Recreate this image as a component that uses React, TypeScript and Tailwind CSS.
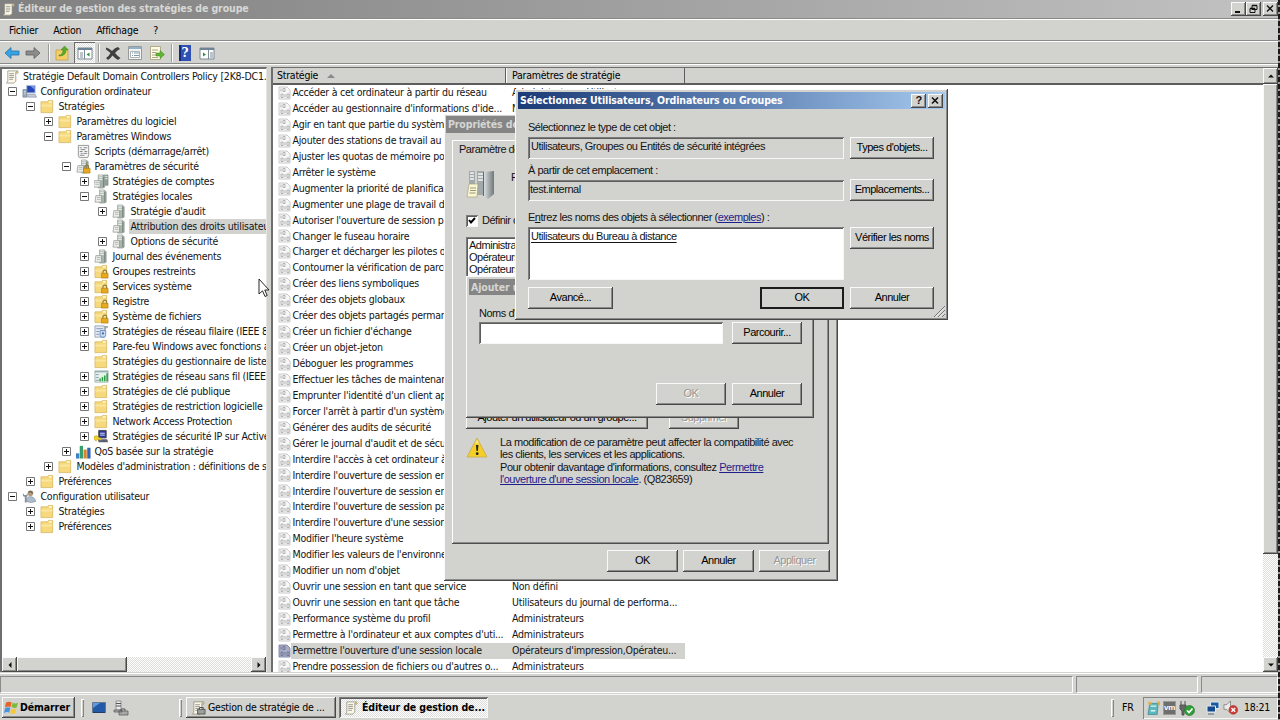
import type { ReactNode } from 'react';
import clsx from 'clsx';

type IconName =
    | 'scroll' | 'pc' | 'user' | 'folder' | 'lockFolder' | 'script' | 'serverLock'
    | 'servers' | 'server' | 'wired' | 'wireless' | 'ipsec' | 'qos';

interface TreeItem {
    depth: number;
    label: string;
    icon: IconName;
    state?: '+' | '-';
    selected?: boolean;
}

const RAISED = 'bg-[#d2d2cf] shadow-[inset_-1px_-1px_0_#484848,inset_1px_1px_0_#fafafa,inset_-2px_-2px_0_#8b8b89]';
const SUNKEN = 'shadow-[inset_1px_1px_0_#7c7c7c,inset_-1px_-1px_0_#f7f7f7,inset_2px_2px_0_#5c5c5c]';
const SUNKEN_THIN = 'shadow-[inset_1px_1px_0_#6c6c6c,inset_-1px_-1px_0_#f7f7f7]';
const TRACK = 'bg-[repeating-conic-gradient(#ffffff_0_25%,#dcdcda_0_50%)] bg-[length:2px_2px]';
const UI = "font-['DejaVu_Sans_Condensed','DejaVu_Sans',sans-serif] text-[10.5px] tracking-[-0.24px]";
const UI_BOLD = "font-['DejaVu_Sans_Condensed','DejaVu_Sans',sans-serif] font-bold text-[10.5px] tracking-[-0.11px]";
const DLG = "font-['Liberation_Sans',sans-serif] text-[11px] tracking-[-0.48px]";

const TREE: TreeItem[] = [
    { depth: 0, label: 'Configuration ordinateur', icon: 'pc', state: '-' },
    { depth: 1, label: 'Stratégies', icon: 'folder', state: '-' },
    { depth: 2, label: 'Paramètres du logiciel', icon: 'folder', state: '+' },
    { depth: 2, label: 'Paramètres Windows', icon: 'folder', state: '-' },
    { depth: 3, label: 'Scripts (démarrage/arrêt)', icon: 'script' },
    { depth: 3, label: 'Paramètres de sécurité', icon: 'serverLock', state: '-' },
    { depth: 4, label: 'Stratégies de comptes', icon: 'servers', state: '+' },
    { depth: 4, label: 'Stratégies locales', icon: 'server', state: '-' },
    { depth: 5, label: "Stratégie d'audit", icon: 'server', state: '+' },
    { depth: 5, label: 'Attribution des droits utilisateur', icon: 'server', selected: true },
    { depth: 5, label: 'Options de sécurité', icon: 'server', state: '+' },
    { depth: 4, label: 'Journal des événements', icon: 'server', state: '+' },
    { depth: 4, label: 'Groupes restreints', icon: 'lockFolder', state: '+' },
    { depth: 4, label: 'Services système', icon: 'lockFolder', state: '+' },
    { depth: 4, label: 'Registre', icon: 'lockFolder', state: '+' },
    { depth: 4, label: 'Système de fichiers', icon: 'lockFolder', state: '+' },
    { depth: 4, label: 'Stratégies de réseau filaire (IEEE 802.3)', icon: 'wired', state: '+' },
    { depth: 4, label: 'Pare-feu Windows avec fonctions avancées', icon: 'folder', state: '+' },
    { depth: 4, label: 'Stratégies du gestionnaire de listes', icon: 'folder' },
    { depth: 4, label: 'Stratégies de réseau sans fil (IEEE 802.11)', icon: 'wireless', state: '+' },
    { depth: 4, label: 'Stratégies de clé publique', icon: 'folder', state: '+' },
    { depth: 4, label: 'Stratégies de restriction logicielle', icon: 'folder', state: '+' },
    { depth: 4, label: 'Network Access Protection', icon: 'folder', state: '+' },
    { depth: 4, label: 'Stratégies de sécurité IP sur Active Directory', icon: 'ipsec', state: '+' },
    { depth: 3, label: 'QoS basée sur la stratégie', icon: 'qos', state: '+' },
    { depth: 2, label: "Modèles d'administration : définitions de stratégies", icon: 'folder', state: '+' },
    { depth: 1, label: 'Préférences', icon: 'folder', state: '+' },
    { depth: 0, label: 'Configuration utilisateur', icon: 'user', state: '-' },
    { depth: 1, label: 'Stratégies', icon: 'folder', state: '+' },
    { depth: 1, label: 'Préférences', icon: 'folder', state: '+' },
];

const POLICIES: [string, string][] = [
    ['Accéder à cet ordinateur à partir du réseau', 'Administrateurs,Utilisateurs...'],
    ["Accéder au gestionnaire d'informations d'ide...", 'Non défini'],
    ['Agir en tant que partie du système', ''],
    ['Ajouter des stations de travail au domaine', ''],
    ['Ajuster les quotas de mémoire pour', ''],
    ['Arrêter le système', ''],
    ['Augmenter la priorité de planification', ''],
    ['Augmenter une plage de travail de', ''],
    ["Autoriser l'ouverture de session par", ''],
    ['Changer le fuseau horaire', ''],
    ['Charger et décharger les pilotes de', ''],
    ['Contourner la vérification de parcours', ''],
    ['Créer des liens symboliques', ''],
    ['Créer des objets globaux', ''],
    ['Créer des objets partagés permanents', ''],
    ["Créer un fichier d'échange", ''],
    ['Créer un objet-jeton', ''],
    ['Déboguer les programmes', ''],
    ['Effectuer les tâches de maintenance', ''],
    ["Emprunter l'identité d'un client après", ''],
    ["Forcer l'arrêt à partir d'un système", ''],
    ['Générer des audits de sécurité', ''],
    ["Gérer le journal d'audit et de sécurité", ''],
    ["Interdire l'accès à cet ordinateur à", ''],
    ["Interdire l'ouverture de session en", ''],
    ["Interdire l'ouverture de session en", ''],
    ["Interdire l'ouverture de session par", ''],
    ["Interdire l'ouverture d'une session", ''],
    ["Modifier l'heure système", ''],
    ["Modifier les valeurs de l'environnement", ''],
    ["Modifier un nom d'objet", ''],
    ['Ouvrir une session en tant que service', 'Non défini'],
    ['Ouvrir une session en tant que tâche', 'Utilisateurs du journal de performa...'],
    ['Performance système du profil', 'Administrateurs'],
    ["Permettre à l'ordinateur et aux comptes d'uti...", 'Administrateurs'],
    ["Permettre l'ouverture d'une session locale", "Opérateurs d'impression,Opérateu..."],
    ["Prendre possession de fichiers ou d'autres o...", 'Administrateurs'],
];

/* ---------- icons ---------- */

function Folder() {
    return (
        <>
            <path d="M1 3h7l1-1.500h4.500V14.500H1z" fill="#f5d97c" stroke="#d0ab50" strokeWidth=".7" />
            <path d="M9.500 2h3v2h-3z" fill="#fff6d0" />
            <path d="M1.500 6h11.500v2H1.500z" fill="#fae6a0" />
        </>
    );
}

function Lock() {
    return (
        <>
            <path d="M9.500 10V8.500a2 2 0 0 1 4 0V10" fill="none" stroke="#8f7a38" strokeWidth="1.200" />
            <path d="M8 10h7v5H8z" fill="#e9a91c" stroke="#a97409" strokeWidth=".6" />
        </>
    );
}

function ServerShape() {
    return (
        <>
            <path d="M6 1h5l2 2v11l-2 1H6z" fill="#a9b4ad" stroke="#7e8a83" strokeWidth=".6" />
            <path d="M6.500 2h4M6.500 4h4M6.500 6h4" stroke="#f3f6f4" />
            <path d="M11.500 3v11" stroke="#6d7f74" />
            <path d="M2 7h6v7H1z" fill="#eceee9" stroke="#8b928c" strokeWidth=".7" />
            <path d="M3 9h4M3 11h4" stroke="#98a29b" strokeWidth=".7" />
        </>
    );
}

function ScrollShape() {
    return (
        <>
            <path d="M3 2h10.500l-2 2v9l-2 2H1.500l1.500-2z" fill="#fbf8ea" stroke="#8f8c7c" strokeWidth=".8" />
            <path d="M11.500 4l1.800-2 1 1.500-1 1.500z" fill="#d8c694" stroke="#98895e" strokeWidth=".5" />
            <path d="M4.500 5h5M4.500 7h5M4.500 9h5M4.500 11h4" stroke="#7e7e78" strokeWidth=".8" />
        </>
    );
}

function TreeIcon({ name, className = 'size-[15px]' }: { name: IconName; className?: string }) {
    return (
        <svg viewBox="0 0 16 16" className={clsx('shrink-0', className)}>
            {name === 'scroll' && <ScrollShape />}
            {name === 'folder' && <Folder />}
            {name === 'lockFolder' && <><Folder /><Lock /></>}
            {name === 'server' && <ServerShape />}
            {name === 'serverLock' && <><ServerShape /><Lock /></>}
            {name === 'servers' && (
                <>
                    <path d="M10 1h5v11h-5z" fill="#8fa39a" stroke="#72847b" strokeWidth=".6" />
                    <path d="M10.500 2.500h4M10.500 5h4" stroke="#e8efeb" />
                    <g transform="translate(-1.500 0)"><ServerShape /></g>
                </>
            )}
            {name === 'script' && (
                <>
                    <path d="M2.500 1.500h11v10l-1 3h-9l-1-2z" fill="#f5f5f5" stroke="#888" strokeWidth=".9" />
                    <path d="M4 4h2M8 4h4M5 6h5M4 8h3M9 8h3M5 10h2M8 10h4M4 12h5" stroke="#777" strokeWidth=".9" />
                </>
            )}
            {name === 'pc' && (
                <>
                    <path d="M5 1.500h9v8H5z" fill="#2547b8" stroke="#b9c2d6" />
                    <path d="M9 2h4.500v4z" fill="#7896ea" />
                    <path d="M1 6h4v8H1z" fill="#9badbd" stroke="#66788c" strokeWidth=".7" />
                    <path d="M6 11h8l1.500 3H6z" fill="#c5ccda" stroke="#76809a" strokeWidth=".6" />
                    <path d="M2 8h2M2 10h2" stroke="#e8eef4" strokeWidth=".7" />
                </>
            )}
            {name === 'user' && (
                <>
                    <circle cx="9" cy="4.500" r="3" fill="#b59a7c" />
                    <path d="M6.200 4q2-4 5.600-.5L11 5 9 3.500z" fill="#66635b" />
                    <path d="M4 13q1-5 5-5t6 5q-5 3-11 0z" fill="#aebccb" stroke="#7b8b9e" strokeWidth=".6" />
                    <path d="M1 4.500v3l2 1v6h2v-6l1-1v-3l-1.500 2h-2z" fill="#86929c" />
                </>
            )}
            {name === 'wired' && (
                <>
                    <path d="M1 2h10v12H1z" fill="#e4ebf3" stroke="#8296ae" strokeWidth=".8" />
                    <path d="M2.500 5h7M2.500 8h3M2.500 11h3" stroke="#7d94b5" />
                    <path d="M11 2h4v2h-2v2h-2z" fill="#9aa" />
                    <path d="M6.500 7h6v5l-1 2h-4l-1-2z" fill="#c9daf2" stroke="#5578ae" strokeWidth=".8" />
                    <path d="M8.500 9h2v2h-2z" fill="#3d64a3" />
                </>
            )}
            {name === 'wireless' && (
                <>
                    <path d="M1 2h14v12H1z" fill="#e9f2ea" stroke="#8ba696" strokeWidth=".8" />
                    <path d="M1 3h14M2 6h3M2 9h3M2 12h3" stroke="#7a9cad" />
                    <path d="M6.500 13v-3M9 13V8.500M11.500 13V7M14 13V4.500" stroke="#2a9d45" strokeWidth="1.600" />
                </>
            )}
            {name === 'ipsec' && (
                <>
                    <path d="M5 1.500h8v8H5z" fill="#26399b" stroke="#4d4d4d" />
                    <path d="M6.500 4.500h5M6.500 6.500h5" stroke="#e6e9ff" />
                    <path d="M4 11h10l1 3H5z" fill="#5a5f70" />
                    <path d="M0 8l3-1 2 2 3 1v2l-4-1-2 2-2-2z" fill="#f0d02c" stroke="#a58d17" strokeWidth=".5" />
                </>
            )}
            {name === 'qos' && (
                <>
                    <path d="M0 10h3.500v5.500H0z" fill="#3b82c4" />
                    <path d="M4 2h3.500v13.500H4z" fill="#35a06b" />
                    <path d="M8 6h3.500v9.500H8z" fill="#d98435" />
                    <path d="M12 4h3.500v11.500H12z" fill="#2f66b5" />
                </>
            )}
        </svg>
    );
}

function PolicyIcon({ active }: { active?: boolean }) {
    return (
        <svg viewBox="0 0 13 14" className="h-[14px] w-[13px] shrink-0">
            <path
                d="M1 1h8l3 3v9H1z"
                fill={active ? '#a9aec6' : '#f7f7f7'}
                stroke={active ? '#7f85a6' : '#c4c4c4'}
                strokeWidth=".9"
            />
            <path
                d="M3 2.500v3M5 2.500h2v3H5zM3 8h2v3.500H3zM7 8v3.500M9 8h2v3.500H9z"
                fill="none"
                stroke={active ? '#6c7299' : '#ababab'}
                strokeWidth=".9"
            />
        </svg>
    );
}

function DialogServers() {
    return (
        <svg viewBox="0 0 30 31" className="h-[31px] w-[30px]">
            <defs>
                <linearGradient id="rack" x1="0" x2="1">
                    <stop offset="0" stopColor="#d9dddd" />
                    <stop offset="1" stopColor="#70787a" />
                </linearGradient>
            </defs>
            <path d="M18 3l10-1v23l-6 5-4-2z" fill="url(#rack)" />
            <path d="M11 2h7v24h-7zM3 2h6v13H3z" fill="#a1a9aa" />
            <path d="M4 4h4M4 7h4M4 10h4M12 5h5M12 8h5M12 11h5" stroke="#f3f5f5" strokeWidth="1.500" />
            <path d="M17.500 3v24" stroke="#61696b" />
            <path d="M3 15h9l-1 13H1z" fill="#faf6d2" stroke="#a8a37e" strokeWidth=".7" />
            <path d="M4 19h6M4 21.500h6M3.500 24h6" stroke="#99957c" />
        </svg>
    );
}

/* ---------- classic widgets ---------- */

function Btn({ children, className, disabled }: { children: ReactNode; className?: string; disabled?: boolean }) {
    return (
        <button
            className={clsx(
                'flex shrink-0 items-center justify-center whitespace-nowrap pb-px',
                RAISED,
                disabled ? 'text-[#979795] [text-shadow:1px_1px_0_#fff]' : 'text-black',
                className,
            )}
        >
            {children}
        </button>
    );
}

function CaptionBtn({ children }: { children: ReactNode }) {
    return (
        <button className={clsx('flex h-[14px] w-[15px] items-center justify-center', RAISED)}>
            <svg viewBox="0 0 11 10" className="h-[10px] w-[11px]" fill="none" stroke="#111">{children}</svg>
        </button>
    );
}

function ArrowBtn({ d, className }: { d: string; className: string }) {
    return (
        <div className={clsx('flex shrink-0 items-center justify-center', RAISED, className)}>
            <svg viewBox="0 0 8 8" className="size-2"><path d={d} fill="#111" /></svg>
        </div>
    );
}

function Expander({ state }: { state?: '+' | '-' }) {
    if (!state) return <span className="w-[9px] shrink-0" />;
    return (
        <svg viewBox="0 0 9 9" className="size-[9px] shrink-0">
            <path d="M.5 .5h8v8h-8z" fill="#fff" stroke="#777" />
            <path d={state === '+' ? 'M2 4.500h5M4.500 2v5' : 'M2 4.500h5'} stroke="#111" />
        </svg>
    );
}

const INDENT = ['pl-[6px]', 'pl-[24px]', 'pl-[42px]', 'pl-[60px]', 'pl-[78px]', 'pl-[96px]'];

function ToolSep({ className }: { className: string }) {
    return <div className={clsx('h-[18px] w-[2px] border-l border-r border-l-[#9a9a98] border-r-white', className)} />;
}

function Toolbar() {
    return (
        <div className="flex h-[21px] items-center pl-[4px]">
            <svg viewBox="0 0 16 16" className="size-4"><path d="M1 8l6-5.500v3.500h8v4H7v3.500z" fill="#37a3e2" stroke="#2173a9" strokeWidth=".8" /></svg>
            <svg viewBox="0 0 16 16" className="ml-[5px] size-4"><path d="M15 8L9 2.500v3.500H1v4h8v3.500z" fill="#8c8c8c" stroke="#5f5f5f" strokeWidth=".8" /></svg>
            <ToolSep className="ml-[7px] mr-[4px]" />
            <svg viewBox="0 0 16 16" className="size-4">
                <path d="M2 5h5l1-1h6v11H2z" fill="#f2cf68" stroke="#c69c37" strokeWidth=".7" />
                <path d="M5 10q4 0 4-5H7l3.500-4L14 5h-2q0 6-7 6z" fill="#56ad2b" stroke="#3c7f1c" strokeWidth=".5" />
            </svg>
            <div className={clsx('ml-[4px] flex h-[21px] w-[21px] items-center justify-center', SUNKEN_THIN, TRACK)}>
                <svg viewBox="0 0 16 16" className="size-4">
                    <path d="M1 3h14v11H1z" fill="#fff" stroke="#7b8a96" />
                    <path d="M1 4h14" stroke="#6e8496" strokeWidth="2" />
                    <path d="M7.500 5v9M3 8h3M3 10h3M3 12h3" stroke="#7b8a96" />
                    <path d="M12.500 7.500v4l-3-2z" fill="#2f9141" />
                </svg>
            </div>
            <ToolSep className="ml-[3px] mr-[5px]" />
            <svg viewBox="0 0 16 16" className="size-4"><path d="M1 2.500q3 .5 6 3.500 3-3.500 6-4l2 2q-2.500 1-5 4 2.500 3 5.500 5l-2.500 2q-2.500-1-5.500-4.500-2 3-4.500 4.500L1 13q2.500-1 4.500-5Q3.500 6 1 4.500z" fill="#3f3f3f" /></svg>
            <svg viewBox="0 0 16 16" className="ml-[6px] size-4">
                <path d="M1.500 1.500h13v13h-13z" fill="#f3f3f3" stroke="#999" />
                <path d="M2 3h12" stroke="#8eb4c5" strokeWidth="2" />
                <path d="M3.500 6.500h9v6h-9z" fill="#fff" stroke="#a9b4b9" />
                <path d="M5 8h1M7 8h5M5 10.500h1M7 10.500h5" stroke="#7e9aa8" />
            </svg>
            <svg viewBox="0 0 16 16" className="ml-[6px] size-4">
                <path d="M1.500 1.500h10v13h-10z" fill="#fffbe2" stroke="#b1ac8b" />
                <path d="M3 5h6M3 7.500h4M3 10h4M3 12.500h6" stroke="#aaa68a" />
                <path d="M7 8h4V5.500L15.500 9.500 11 13.500V11H7z" fill="#60b632" stroke="#3f8420" strokeWidth=".5" />
            </svg>
            <ToolSep className="ml-[6px] mr-[6px]" />
            <div className="flex h-[16px] w-[12px] items-center justify-center bg-[#2f50b4] font-['DejaVu_Serif',serif] text-[12px] font-bold text-white shadow-[inset_2px_0_0_#16297a]">?</div>
            <svg viewBox="0 0 16 16" className="ml-[8px] size-4">
                <path d="M1 3h14v11H1z" fill="#fff" stroke="#7b8a96" />
                <path d="M1 4h14" stroke="#6e8496" strokeWidth="2" />
                <path d="M9.500 5v9M11 8h3M11 10h3M11 12h3" stroke="#7b8a96" />
                <path d="M4 7.500v4l3-2z" fill="#2f9141" />
            </svg>
        </div>
    );
}

function TreePane() {
    return (
        <div className="flex w-[267px] shrink-0 flex-col border-l-2 border-r border-t-2 border-[#6e6e6e] border-r-[#e6e6e4] bg-white">
            <div className="min-h-0 flex-1 overflow-hidden">
                <div className="flex h-[15px] items-center gap-[3px] pl-[3px]">
                    <TreeIcon name="scroll" />
                    <span className="whitespace-nowrap">Stratégie Default Domain Controllers Policy [2K8-DC1.</span>
                </div>
                {TREE.map((item, i) => (
                    <div key={i} className={clsx('flex h-[15px] items-center', INDENT[item.depth])}>
                        <Expander state={item.state} />
                        <TreeIcon name={item.icon} className="ml-[5px] size-[15px]" />
                        <span
                            className={clsx(
                                'ml-[2px] h-[15px] whitespace-nowrap pl-[1.5px] leading-[14px]',
                                item.selected && 'bg-[#d2d2cf]',
                            )}
                        >
                            {item.label}
                        </span>
                    </div>
                ))}
            </div>
            <div className={clsx('flex h-[15px]', TRACK)}>
                <ArrowBtn d="M5.500 1v6L2.500 4z" className="w-[15px]" />
                <div className={clsx('w-[110px]', RAISED)} />
                <div className="flex-1" />
                <ArrowBtn d="M2.500 1v6l3-3z" className="w-[15px]" />
            </div>
        </div>
    );
}

function PolicyList() {
    return (
        <div className="flex min-w-0 flex-1 border-l-2 border-t border-[#6e6e6e] bg-white">
            <div className="min-w-0 flex-1 overflow-hidden">
                <div className="flex h-[17px] items-center border-b-2 border-[#5d5d5d] bg-[#d2d2cf] text-black">
                    <div className="flex h-full w-[233px] items-center gap-[9px] border-r border-[#5d5d5d] pl-[4px] pt-px">
                        Stratégie
                        <svg viewBox="0 0 8 4" className="h-1 w-2"><path d="M4 0l4 4H0z" fill="#8a8a8a" /></svg>
                    </div>
                    <div className="flex h-full w-[179px] items-center border-l border-r border-l-white border-r-[#5d5d5d] pl-[5px] pt-px">
                        Paramètres de stratégie
                    </div>
                </div>
                {POLICIES.map(([name, value], i) => {
                    const active = i === 35;
                    return (
                        <div key={i} className="flex h-[15.95px] items-center pl-[5px]">
                            <PolicyIcon active={active} />
                            <div className={clsx('flex h-full w-[394px] items-center whitespace-nowrap', active && 'bg-[#d2d2cf]')}>
                                <span className="w-[221px] shrink-0 pl-[1.5px]">{name}</span>
                                <span>{value}</span>
                            </div>
                        </div>
                    );
                })}
            </div>
            <div className={clsx('flex w-[15px] flex-col', TRACK)}>
                <ArrowBtn d="M1 5.500h6L4 2.500z" className="h-[16px]" />
                <div className={clsx('h-[470px]', RAISED)} />
                <div className="flex-1" />
                <ArrowBtn d="M1 2.500h6L4 5.500z" className="h-[15px]" />
            </div>
        </div>
    );
}

function PropertiesDialog() {
    return (
        <div className={clsx('absolute left-[444px] top-[114px] h-[467px] w-[394px] p-[2px]', RAISED, DLG)}>
            <div className={clsx('h-[17px] bg-[#858585] pl-[2px] leading-[17px] text-[#d6d6d3]', UI_BOLD)}>Propriétés de</div>
            <div className="ml-[6px] mt-[7px] flex h-[17px] w-[84px] items-center whitespace-nowrap border-l border-t border-white pl-[6px]">
                Paramètre de stratégie
            </div>
            <div className="ml-[6px] h-[387px] w-[377px] pl-[14px] pt-[12px] shadow-[inset_-1px_-1px_0_#4e4e4e,inset_1px_0_0_#fff,inset_-2px_-2px_0_#8b8b89]">
                <div className="flex h-[31px] gap-[15px]">
                    <DialogServers />
                    <span>Permettre</span>
                </div>
                <div className="mt-[14px] flex h-[13px] items-center gap-[4px]">
                    <div className={clsx('flex size-[12px] items-center justify-center bg-white', SUNKEN)}>
                        <svg viewBox="0 0 8 8" className="size-2"><path d="M1 3l2 2.500L7 1" fill="none" stroke="#000" strokeWidth="2" /></svg>
                    </div>
                    <span>Définir ces</span>
                </div>
                <div className={clsx('mt-[10px] h-[160px] w-[270px] bg-white py-[2px] pl-[3px] leading-[12px]', SUNKEN)}>
                    <div>Administrateurs</div>
                    <div>Opérateurs de</div>
                    <div>Opérateurs de</div>
                </div>
                <div className="mt-[10px] flex gap-[21px]">
                    <Btn className="h-[22px] w-[182px]">Ajouter un utilisateur ou un groupe...</Btn>
                    <Btn className="h-[22px] w-[70px]" disabled>Supprimer</Btn>
                </div>
                <div className="mt-[7px] flex">
                    <svg viewBox="0 0 22 21" className="mt-px h-[21px] w-[22px]">
                        <path d="M11 1L21 20H1z" fill="#f6cf26" stroke="#cdb156" strokeLinejoin="round" />
                        <path d="M11 2.500l2 4h-4z" fill="#fae88c" />
                        <path d="M10 8h2.400l-.5 6h-1.400z" fill="#222" />
                        <circle cx="11.200" cy="16.700" r="1.400" fill="#222" />
                    </svg>
                    <p className="ml-[12px] whitespace-nowrap leading-[12.3px] tracking-[-0.45px]">
                        La modification de ce paramètre peut affecter la compatibilité avec<br />
                        les clients, les services et les applications.<br />
                        Pour obtenir davantage d'informations, consultez <u className="text-[#1f1f8c]">Permettre</u><br />
                        <u className="text-[#1f1f8c]">l'ouverture d'une session locale</u>. (Q823659)
                    </p>
                </div>
            </div>
            <div className="mr-[6px] mt-[6px] flex justify-end gap-[5px]">
                <Btn className="h-[22px] w-[71px]">OK</Btn>
                <Btn className="h-[22px] w-[71px]">Annuler</Btn>
                <Btn className="h-[22px] w-[71px]" disabled>Appliquer</Btn>
            </div>
        </div>
    );
}

function AddDialog() {
    return (
        <div className={clsx('absolute left-[466px] top-[276px] h-[142px] w-[348px] p-[3px]', RAISED, DLG)}>
            <div className={clsx('h-[16px] bg-[#858585] pl-[2px] leading-[16px] text-[#d6d6d3]', UI_BOLD)}>Ajouter un</div>
            <div className="ml-[10px] mt-[10px] h-[17px] leading-[17px]">Noms d'utilisateurs</div>
            <div className="ml-[10px] flex gap-[9px]">
                <div className={clsx('h-[22px] w-[244px] bg-white', SUNKEN)} />
                <Btn className="h-[22px] w-[70px]">Parcourir...</Btn>
            </div>
            <div className="mr-[9px] mt-[39px] flex justify-end gap-[6px]">
                <Btn className="h-[22px] w-[70px]" disabled>OK</Btn>
                <Btn className="h-[22px] w-[70px]">Annuler</Btn>
            </div>
        </div>
    );
}

function SelectDialog() {
    return (
        <div className={clsx('absolute left-[515px] top-[89px] h-[231px] w-[433px] p-[3px]', RAISED, DLG)}>
            <div className="flex h-[17px] items-center gap-[2px] bg-gradient-to-r from-[#1c3a76] to-[#a5c8ee] pl-[2px] pr-[2px]">
                <span className={clsx('flex-1 whitespace-nowrap pt-px text-white', UI_BOLD)}>
                    Sélectionnez Utilisateurs, Ordinateurs ou Groupes
                </span>
                <button className={clsx('flex h-[14px] w-[15px] items-center justify-center text-[11px] font-bold', RAISED)}>?</button>
                <CaptionBtn><path d="M2 1.500l6 6M8 1.500l-6 6" strokeWidth="1.600" /></CaptionBtn>
            </div>
            <div className="ml-[10px] mt-[10px] grid w-[406px] grid-cols-[316px_84px] gap-x-[6px]">
                <div className="col-span-2 h-[18px] leading-[17px]">Sélectionnez le type de cet objet :</div>
                <div className={clsx('h-[22px] pl-[3px] leading-[19px]', SUNKEN)}>Utilisateurs, Groupes ou Entités de sécurité intégrées</div>
                <Btn className="h-[22px]">Types d'objets...</Btn>
                <div className="col-span-2 h-[20px] leading-[23px]">À partir de cet emplacement :</div>
                <div className={clsx('mt-px h-[21px] pl-[2px] leading-[18px]', SUNKEN)}>test.internal</div>
                <Btn className="h-[22px]">Emplacements...</Btn>
                <div className="col-span-2 h-[26px] pt-[6px] leading-[20px]">
                    E<u>n</u>trez les noms des objets à sélectionner (<u className="text-[#1f1f8c]">exemples</u>) :
                </div>
                <div className={clsx('h-[53px] bg-white pl-[3px] pt-[3px] leading-[13px]', SUNKEN)}>
                    <u className="underline-offset-2">Utilisateurs du Bureau à distance</u>
                </div>
                <Btn className="h-[22px]">Vérifier les noms</Btn>
            </div>
            <div className="ml-[10px] mt-[7px] flex gap-[6px]">
                <Btn className="mr-[141px] h-[22px] w-[85px]">Avancé...</Btn>
                <button className="flex h-[22px] w-[84px] items-center justify-center border-2 border-[#1c1c1c] bg-[#d2d2cf] pb-px text-black">OK</button>
                <Btn className="h-[22px] w-[84px]">Annuler</Btn>
            </div>
            <svg viewBox="0 0 12 12" className="absolute bottom-[3px] right-[3px] size-3">
                <path d="M1 12L12 1M5 12l7-7M9 12l3-3" stroke="#777" />
                <path d="M2.500 12L12 2.500M6.500 12L12 6.500" stroke="#fff" strokeWidth=".7" />
            </svg>
        </div>
    );
}

function Grip() {
    return <div className="h-[18px] w-[3px] shadow-[inset_1px_1px_0_#fff,inset_-1px_-1px_0_#858585]" />;
}

function Taskbar() {
    return (
        <div className="flex h-[26px] items-center border-t border-[#f7f7f7] bg-[#d2d2cf] pl-[2px] text-black">
            <button className={clsx('flex h-[21px] w-[73px] items-center gap-px whitespace-nowrap pl-[2px]', RAISED, UI_BOLD)}>
                <svg viewBox="0 0 16 16" className="size-[15px] shrink-0">
                    <path d="M2 3q3-2 6-.5L7 7.500Q4 6 1 8z" fill="#e5632b" />
                    <path d="M9 3q3 1.500 6 0l-1.500 5Q11 9 8 7.500z" fill="#7fb93c" />
                    <path d="M1 9q3-2 5.700-.5L5.500 13.500Q3 12 0 14z" fill="#4793dc" />
                    <path d="M7.700 9q3 1.500 5.800 0L12 14q-3 1.500-5.500 0z" fill="#f5c93a" />
                </svg>
                Démarrer
            </button>
            <div className="ml-[6px]"><Grip /></div>
            <svg viewBox="0 0 14 12" className="ml-[8px] h-[12px] w-[14px]">
                <path d="M.5 .5h13v10H.5z" fill="#225aa8" stroke="#66788e" />
                <path d="M1 1h7L1 6z" fill="#5b9be0" />
                <path d="M1 10.500h12" stroke="#243c62" />
            </svg>
            <svg viewBox="0 0 16 16" className="ml-[7px] size-[16px]">
                <path d="M3 1h5v9H3z" fill="#e9ecea" stroke="#777" strokeWidth=".7" />
                <path d="M3 3.500h5M3 6h5" stroke="#555" />
                <path d="M1 10h8v2H1zM6 11h9v4H6z" fill="#a6aba8" stroke="#555" strokeWidth=".7" />
                <path d="M8 11V9h4v2" fill="none" stroke="#555" />
            </svg>
            <div className="ml-[50px]"><Grip /></div>
            <button className={clsx('ml-[4px] flex h-[21px] w-[150px] items-center gap-[2px] whitespace-nowrap pl-[5px]', RAISED)}>
                <svg viewBox="0 0 16 16" className="size-[15px] shrink-0">
                    <ScrollShape />
                    <path d="M7 10h8v5H7z" fill="#9aa09d" stroke="#444" strokeWidth=".8" />
                    <path d="M9 10V8h4v2" fill="none" stroke="#444" />
                </svg>
                Gestion de stratégie de ...
            </button>
            <button className={clsx('ml-[3px] flex h-[21px] w-[149px] items-center gap-[3px] whitespace-nowrap pl-[5px]', SUNKEN, TRACK, UI_BOLD)}>
                <TreeIcon name="scroll" />
                Éditeur de gestion de...
            </button>
            <div className="flex-1" />
            <Grip />
            <span className="ml-[8px] w-[21px]">FR</span>
            <div className="flex h-[22px] w-[135px] items-center pl-[4px] shadow-[inset_1px_1px_0_#858585,inset_-1px_-1px_0_#f7f7f7]">
                <svg viewBox="0 0 14 16" className="h-[16px] w-[13px]">
                    <path d="M3 3h9l-1 12H1z" fill="#5cb7bd" stroke="#31848c" strokeWidth=".7" />
                    <path d="M4 6h6M4 11h5" stroke="#dff3f2" strokeWidth="1.500" />
                    <path d="M1 2l3-1 1 3-3 1zM11 1h3v4h-2z" fill="#e0ac4d" />
                </svg>
                <div className="ml-[3px] flex h-[14px] w-[13px] items-center justify-center bg-[#6e6e6e] font-['Liberation_Sans',sans-serif] text-[8px] font-bold text-white ring-1 ring-inset ring-[#999]">vm</div>
                <svg viewBox="0 0 16 16" className="ml-[3px] size-4">
                    <path d="M2 1v4M6 1v4M1 5h6v4L5 11v4H3v-4L1 9z" fill="#666" stroke="#555" />
                    <circle cx="10.500" cy="10.500" r="5" fill="#2d9e38" stroke="#1b7224" strokeWidth=".6" />
                    <path d="M8 10.500l2 2 3.500-4" fill="none" stroke="#fff" strokeWidth="1.700" />
                </svg>
                <svg viewBox="0 0 14 14" className="ml-[11px] size-[14px]">
                    <path d="M4.500 1h8.500v6.500H4.500z" fill="#1d5ba1" stroke="#dfe9f2" />
                    <path d="M1 5h8.500v6H1z" fill="#164a8b" stroke="#dfe9f2" />
                    <path d="M2 13h6" stroke="#54677c" />
                </svg>
                <svg viewBox="0 0 16 16" className="ml-[3px] size-[15px]">
                    <path d="M1 5h3l4-4v13l-4-4H1z" fill="#ececec" stroke="#777" strokeWidth=".8" />
                    <circle cx="11" cy="10.500" r="4.700" fill="#d03a35" stroke="#992622" strokeWidth=".5" />
                    <path d="M9 8.500l4 4M13 8.500l-4 4" stroke="#fff" strokeWidth="1.500" />
                </svg>
                <span className="ml-[6px]">18:21</span>
            </div>
        </div>
    );
}

export default function App() {
    return (
        <div className={clsx('relative flex h-[720px] w-[1280px] overflow-hidden bg-[#d2d2cf] text-[#141414]', UI)}>
            <div className="flex w-[1278px] shrink-0 flex-col">
                <div className="flex h-[18px] items-center bg-gradient-to-r from-[#808080] to-[#c2c2c2] pl-[2px]">
                    <TreeIcon name="scroll" className="size-[14px]" />
                    <span className={clsx('ml-[2px] flex-1 text-[#d8d8d5]', UI_BOLD)}>
                        Éditeur de gestion des stratégies de groupe
                    </span>
                    <CaptionBtn><path d="M2 8h5" strokeWidth="2" /></CaptionBtn>
                    <CaptionBtn>
                        <path d="M4 1.500h5v4H4zM2 4.500h5v4H2z" fill="#d2d2cf" />
                        <path d="M4 1.500h5M2 4.500h5" strokeWidth="1.600" />
                    </CaptionBtn>
                    <div className="ml-[2px]"><CaptionBtn><path d="M2 1.500l6 6M8 1.500l-6 6" strokeWidth="1.300" /></CaptionBtn></div>
                </div>
                <div className="h-[2px] border-b border-t border-b-white border-t-[#8a8a88]" />
                <div className="flex h-[20px] items-center gap-[15px] pl-[9px] pt-px text-black">
                    <span>Fichier</span>
                    <span>Action</span>
                    <span>Affichage</span>
                    <span>?</span>
                </div>
                <div className="h-[2px] border-b border-t border-b-white border-t-[#8a8a88]" />
                <Toolbar />
                <div className="mb-[2px] h-[2px] border-b border-t border-b-white border-t-[#8a8a88]" />
                <div className="flex h-[606px] gap-[4px] pb-px">
                    <TreePane />
                    <PolicyList />
                </div>
                <div className="flex h-[21px] gap-[3px] border-t border-white pb-px pt-[2px]">
                    <div className="w-[1073px] border border-[#8a8a88] border-b-white border-r-white" />
                    <div className="w-[122px] border border-[#8a8a88] border-b-white border-r-white" />
                    <div className="flex-1 border border-[#8a8a88] border-b-white border-r-white" />
                </div>
                <Taskbar />
            </div>
            <div className="flex-1 bg-[repeating-linear-gradient(#1a1a1a_0_5px,#9a9a9a_5px_7px)]" />

            <PropertiesDialog />
            <AddDialog />
            <SelectDialog />

            <svg viewBox="0 0 12 20" className="absolute left-[258px] top-[278px] h-5 w-3">
                <path d="M1 1v15l3.500-3.200L7 18.500l2.200-1L6.800 12H11z" fill="#fff" stroke="#111" strokeWidth=".9" />
            </svg>
        </div>
    );
}
